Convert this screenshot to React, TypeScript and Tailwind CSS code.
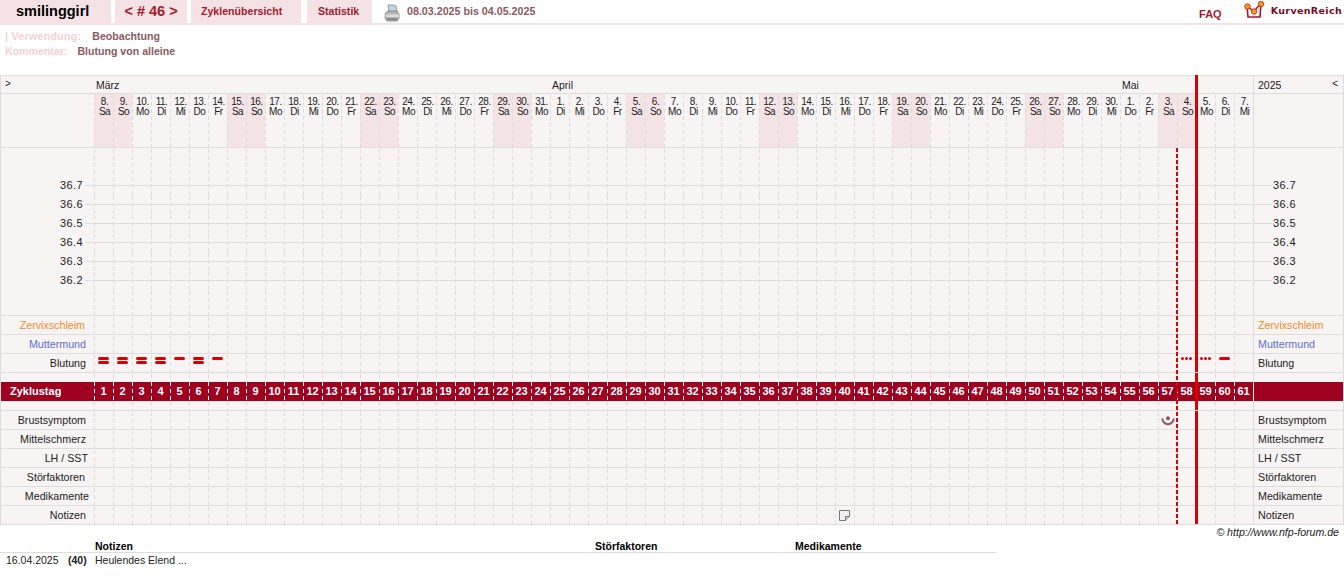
import React from "react";

const DAYS = ["Sa", "So", "Mo", "Di", "Mi", "Do", "Fr"];
const dates: { d: number; w: string; we: boolean }[] = (() => {
  const out: { d: number; w: string; we: boolean }[] = [];
  const lens = [24, 30, 7];
  const starts = [8, 1, 1];
  let k = 0;
  lens.forEach((l, m) => {
    for (let j = 0; j < l; j++) {
      const w = DAYS[k % 7];
      out.push({ d: starts[m] + j, w, we: k % 7 < 2 });
      k++;
    }
  });
  return out;
})();

const idx = Array.from({ length: 61 }, (_, i) => i);
const DASH =
  "bg-[linear-gradient(#dedcdc_0,#dedcdc_4px,transparent_4px)] bg-[length:1px_7px] bg-repeat-y bg-[position:0_1px]";

function Cells({ render, cellClass = "" }: { render?: (i: number) => React.ReactNode; cellClass?: string }) {
  return (
    <div className="flex w-[1159px] shrink-0">
      {idx.map((i) => (
        <div key={i} className={`w-[19px] shrink-0 ${DASH} ${cellClass}`}>
          {render ? render(i) : null}
        </div>
      ))}
    </div>
  );
}

function Row({
  h,
  border = true,
  left,
  right,
  render,
}: {
  h: string;
  border?: boolean;
  left?: React.ReactNode;
  right?: React.ReactNode;
  render?: (i: number) => React.ReactNode;
}) {
  return (
    <div className={`flex ${h} text-[10.7px] leading-[13px] ${border ? "border-b border-[#dedcdc]" : ""}`}>
      <div className="w-[93px] shrink-0 flex items-center justify-end">{left}</div>
      <Cells render={render} />
      <div className="w-[90px] shrink-0 border-l border-[#dedcdc] flex items-center pl-[4px]">{right}</div>
    </div>
  );
}

function TempRow({ v }: { v: string }) {
  return (
    <div className="flex h-[19px] text-[11px] tracking-[0.4px] text-[#222]">
      <div className="w-[93px] shrink-0 flex items-center justify-end">
        <span>{v}</span>
        <span className="w-[9px] h-px bg-[#dedcdc] ml-[2px]" />
      </div>
      <div className="relative">
        <Cells cellClass="h-[19px]" />
        <div className="absolute left-0 right-0 top-[9px] h-px bg-[#dedcdc]" />
      </div>
      <div className="w-[90px] shrink-0 border-l border-[#dedcdc] flex items-center">
        <span className="w-[18px] h-px bg-[#dedcdc] mr-[1px]" />
        <span>{v}</span>
      </div>
    </div>
  );
}

function Bleed({ i }: { i: number }) {
  const two = [0, 1, 2, 3, 5];
  const one = [4, 6];
  if (two.includes(i))
    return (
      <div className="flex flex-col items-center gap-[1px] pt-[3px]">
        <div className="w-[11px] h-[3px] rounded-full bg-[#dd0000]" />
        <div className="w-[11px] h-[3px] rounded-full bg-[#dd0000]" />
      </div>
    );
  if (one.includes(i))
    return (
      <div className="flex justify-center pt-[3px]">
        <div className="w-[11px] h-[3px] rounded-full bg-[#dd0000]" />
      </div>
    );
  if (i === 57 || i === 58)
    return (
      <div className="flex justify-center gap-[1px] pt-[3px]">
        <div className="w-[3px] h-[3px] rounded-full bg-[#dd0000]" />
        <div className="w-[3px] h-[3px] rounded-full bg-[#dd0000]" />
        <div className="w-[3px] h-[3px] rounded-full bg-[#dd0000]" />
      </div>
    );
  if (i === 59)
    return (
      <div className="flex justify-center pt-[3px]">
        <div className="w-[11px] h-[3px] rounded-full bg-[#dd0000]" />
      </div>
    );
  return null;
}

function Printer() {
  return (
    <svg width="16" height="18" viewBox="0 0 16 18" className="shrink-0">
      <path d="M4 1h6l2 1 1 6H5z" fill="#c3d3e6" stroke="#7b8ea6" strokeWidth="0.8" />
      <path d="M1.5 9 4 7h9l2 3v4l-2 3H3l-2-3z" fill="#b8b8b8" stroke="#777" strokeWidth="0.8" />
      <path d="M1.5 10.5h13.5v2.5H1.5z" fill="#dcdcdc" />
      <path d="M3 14h10v2H3z" fill="#8a8a8a" />
    </svg>
  );
}

function Logo() {
  return (
    <svg width="21" height="19" viewBox="0 0 21 19" className="shrink-0">
      <path d="M0 15h20M5 3v14M10 3v14M15 3v14" stroke="#f3e7e8" strokeWidth="1" />
      <path d="M3 5 4 16h12l1-14" fill="none" stroke="#b01030" strokeWidth="1.6" />
      <path d="M3.5 5.5 10 10.5 17 2" fill="none" stroke="#b01030" strokeWidth="1.4" />
      <circle cx="3.5" cy="5.5" r="2.8" fill="#f59a12" stroke="#b01030" strokeWidth="0.7" />
      <circle cx="10" cy="10.5" r="2.8" fill="#f59a12" stroke="#b01030" strokeWidth="0.7" />
      <circle cx="17" cy="3" r="2.8" fill="#f59a12" stroke="#b01030" strokeWidth="0.7" />
    </svg>
  );
}

const TAB = "h-[23px] bg-[#f4e2e4] flex items-center shrink-0";

export default function App() {
  return (
    <div className="w-[1344px] bg-white font-['Liberation_Sans',Arial,sans-serif] text-[10.5px] text-[#222]">
      {/* top bar */}
      <div className="h-[25px] border-b-2 border-[#f4e2e4] flex">
        <div className={`${TAB} w-[111px] pl-[16px] text-[14.5px] font-bold text-black`}>smilinggirl</div>
        <div className={`${TAB} w-[72px] ml-[4px] justify-center text-[14.5px] font-bold text-[#a6192e]`}>&lt; # 46 &gt;</div>
        <div className={`${TAB} w-[110px] ml-[4px] pl-[10px] text-[10.6px] font-bold text-[#a6192e]`}>Zyklenübersicht</div>
        <div className={`${TAB} w-[65px] ml-[6px] pl-[11px] text-[10.6px] font-bold text-[#a6192e]`}>Statistik</div>
        <div className="ml-[12px] mt-[4px]">
          <Printer />
        </div>
        <div className="ml-[7px] h-[23px] flex items-center text-[10.7px] font-bold text-[#8a5a60]">
          08.03.2025 bis 04.05.2025
        </div>
        <div className="ml-auto h-[23px] flex">
          <div className="pt-[6px] text-[11px] font-bold text-[#a6192e]">FAQ</div>
          <div className="ml-[22px] mt-[1px]">
            <Logo />
          </div>
          <div className="ml-[6px] mr-[2px] pt-[4px] font-['DejaVu_Sans',sans-serif] text-[9.5px] font-bold tracking-[0.35px] text-[#7a0a26]">
            KurvenReich
          </div>
        </div>
      </div>

      {/* info */}
      <div className="h-[50px] pl-[5px] pt-[4px] leading-[15px] text-[10.6px] font-bold">
        <div className="flex">
          <span className="text-[#f8d0d2] tracking-[0.3px]">| Verwendung:</span>
          <span className="ml-[11px] text-[#8a5a60]">Beobachtung</span>
        </div>
        <div className="flex">
          <span className="text-[#f8d0d2]">Kommentar:</span>
          <span className="ml-[10px] text-[#8a5a60]">Blutung von alleine</span>
        </div>
      </div>

      {/* chart */}
      <div className="relative w-[1344px] border border-[#dedcdc] bg-[#f9f4f4] text-[#222]">
        {/* months */}
        <div className="flex h-[18px] border-b border-[#dedcdc]">
          <div className="w-[93px] shrink-0 pl-[4px] text-[10px] leading-[16px]">&gt;</div>
          <div className="flex w-[1159px] shrink-0 items-center leading-[18px]">
            <div className="w-[456px] pl-[2px]">März</div>
            <div className="w-[570px] pl-[2px]">April</div>
            <div className="w-[133px] pl-[2px]">Mai</div>
          </div>
          <div className="w-[90px] shrink-0 border-l border-[#dedcdc] pl-[4px] pr-[5px] flex justify-between leading-[18px]">
            <span>2025</span>
            <span className="text-[10px] leading-[16px]">&lt;</span>
          </div>
        </div>
        {/* days */}
        <div className="flex h-[54px] border-b border-[#dedcdc]">
          <div className="w-[93px] shrink-0" />
          <div className="flex w-[1159px] shrink-0">
            {dates.map((x, i) => (
              <div
                key={i}
                className={`w-[19px] shrink-0 pt-[3px] pl-[2px] text-center text-[10px] leading-[10px] tracking-[-0.5px] ${DASH} ${x.we ? "bg-[#f4e4e6]" : ""}`}
              >
                <div>{x.d}.</div>
                <div>{x.w}</div>
              </div>
            ))}
          </div>
          <div className="w-[90px] shrink-0 border-l border-[#dedcdc]" />
        </div>
        {/* temperature */}
        <Row h="h-[28px]" border={false} />
        {["36.7", "36.6", "36.5", "36.4", "36.3", "36.2"].map((v) => (
          <TempRow key={v} v={v} />
        ))}
        <Row h="h-[26px]" />
        {/* upper labels */}
        <Row
          h="h-[19px]"
          left={<span className="pr-[9px] text-[#f58a1f]">Zervixschleim</span>}
          right={<span className="text-[#f58a1f]">Zervixschleim</span>}
        />
        <Row
          h="h-[19px]"
          left={<span className="pr-[8px] text-[#5b70d6]">Muttermund</span>}
          right={<span className="text-[#5b70d6]">Muttermund</span>}
        />
        <Row
          h="h-[19px]"
          left={<span className="pr-[8px]">Blutung</span>}
          right={<span>Blutung</span>}
          render={(i) => <Bleed i={i} />}
        />
        <Row h="h-[9px]" border={false} />
        {/* band */}
        <div className="flex h-[19px] bg-[#a00020] text-[11px] text-white font-bold">
          <div className="w-[93px] shrink-0 pl-[9px] leading-[19px]">Zyklustag</div>
          <div className="flex w-[1159px] shrink-0">
            {idx.map((i) => (
              <div
                key={i}
                className="w-[19px] shrink-0 text-center leading-[19px] bg-[linear-gradient(#ffffff_0,#ffffff_4px,transparent_4px)] bg-[length:1px_7px] bg-repeat-y"
              >
                {i + 1}
              </div>
            ))}
          </div>
          <div className="w-[90px] shrink-0 border-l border-white" />
        </div>
        <Row h="h-[10px]" />
        {/* lower labels */}
        <Row
          h="h-[19px]"
          left={<span className="pr-[8px]">Brustsymptom</span>}
          right={<span>Brustsymptom</span>}
          render={(i) =>
            i === 56 ? (
              <div className="flex justify-center pt-[5px]">
                <svg width="14" height="10" viewBox="0 0 14 10">
                  <circle cx="7" cy="2.2" r="2" fill="#8a5a60" />
                  <path d="M1.3 2.5a5.7 5.7 0 0 0 11.4 0" fill="none" stroke="#8a5a60" strokeWidth="2" />
                </svg>
              </div>
            ) : null
          }
        />
        <Row h="h-[19px]" left={<span className="pr-[8px]">Mittelschmerz</span>} right={<span>Mittelschmerz</span>} />
        <Row h="h-[19px]" left={<span className="pr-[6px]">LH / SST</span>} right={<span>LH / SST</span>} />
        <Row h="h-[19px]" left={<span className="pr-[9px]">Störfaktoren</span>} right={<span>Störfaktoren</span>} />
        <Row h="h-[19px]" left={<span className="pr-[5px]">Medikamente</span>} right={<span>Medikamente</span>} />
        <Row
          h="h-[18px]"
          border={false}
          left={<span className="pr-[8px]">Notizen</span>}
          right={<span>Notizen</span>}
          render={(i) =>
            i === 39 ? (
              <div className="flex justify-center pt-[4px]">
                <svg width="11" height="11" viewBox="0 0 11 11">
                  <path d="M.5.5h10v6l-4 4h-6z" fill="#f4f0f0" stroke="#777" strokeWidth="1" />
                  <path d="M6.5 10.5v-4h4" fill="#cfcfcf" stroke="#777" strokeWidth="1" />
                </svg>
              </div>
            ) : null
          }
        />
        {/* today + cycle-end markers */}
        <div className="absolute left-[1175px] top-[72px] bottom-0 w-[2px] bg-[linear-gradient(#dd0000_0,#dd0000_4px,transparent_4px)] bg-[length:2px_6px] bg-repeat-y" />
        <div className="absolute left-[1194px] top-[-1px] bottom-0 w-[3px] bg-[#dd0000]" />
        <div className="absolute left-[1194px] top-[296px] w-[3px] h-px bg-[#f0e6e6]" />
        <div className="absolute left-[1194px] top-[334px] w-[3px] h-px bg-[#f0e6e6]" />
      </div>

      {/* footer */}
      <div className="h-[14px] pr-[5px] text-right italic text-[10.6px] leading-[14px]">© http://www.nfp-forum.de</div>
      <div className="w-[996px] h-[14px] border-b border-[#dedcdc] flex font-bold text-black leading-[14px]">
        <div className="w-[95px] shrink-0" />
        <div className="w-[500px] shrink-0">Notizen</div>
        <div className="w-[200px] shrink-0">Störfaktoren</div>
        <div>Medikamente</div>
      </div>
      <div className="flex leading-[15px]">
        <div className="w-[68px] shrink-0 pl-[6px]">16.04.2025</div>
        <div className="w-[27px] shrink-0 font-bold">(40)</div>
        <div>Heulendes Elend ...</div>
      </div>
    </div>
  );
}
